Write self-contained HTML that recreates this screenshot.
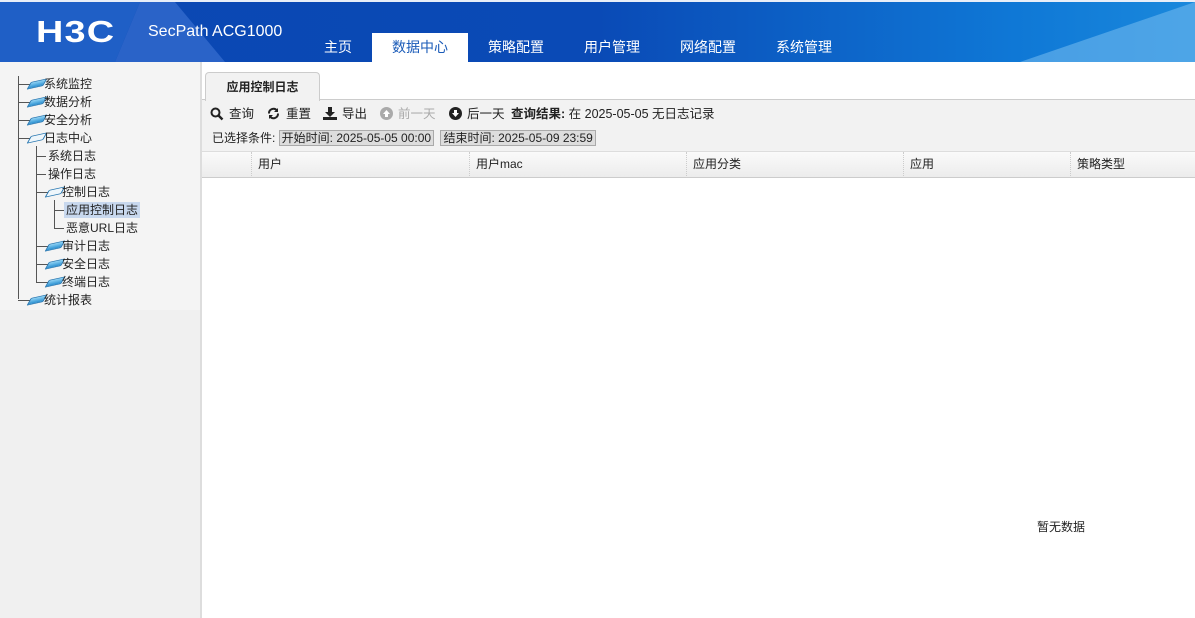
<!DOCTYPE html><html><head><meta charset="utf-8"><style>
body{margin:0;width:1195px;height:618px;overflow:hidden;font-family:"Liberation Sans","Noto Sans CJK SC",sans-serif;font-size:12px;color:#222;background:#fff;position:relative}
.hdr{position:absolute;left:0;top:0;width:1195px;height:62px;background:linear-gradient(90deg,#0b47b2 0%,#0a4ab6 50%,#0f78d6 85%,#1a88dc 100%);overflow:hidden;border-top:2px solid #e8eef8;box-sizing:border-box}
.a{position:absolute;white-space:nowrap}
.nav{position:absolute;top:33px;height:29px;line-height:29px;color:#fff;font-size:14px;text-align:center}
.side{position:absolute;left:0;top:62px;width:200px;height:556px;background:#f0f0f0;border-right:2px solid #ddd}
.t{position:absolute;font-size:12px;line-height:16px;color:#222;white-space:nowrap}
.ic{position:absolute;width:12px;height:6px;background:linear-gradient(#8fd3f5,#2a8fd0);border:1px solid #2475b0;transform:skewX(-40deg) rotate(-15deg);border-radius:1px}
.hl{position:absolute;height:1px;background:#555}
.vl{position:absolute;width:1px;background:#555}
.th{position:absolute;top:152px;height:24px;line-height:24px;border-left:1px dotted #ccc;padding-left:6px;box-sizing:border-box}
.tb{position:absolute;top:105px;line-height:18px;white-space:nowrap;font-size:12.5px}
</style></head><body>
<div class="hdr">
<div class="a" style="left:0;top:0;width:140px;height:62px;background:#1f5fc6;clip-path:polygon(0 0,140px 0,115px 60px,0 60px)"></div>
<div class="a" style="left:115px;top:0;width:110px;height:62px;background:#2a63c8;clip-path:polygon(25px 0,60px 0,110px 60px,0 60px)"></div>
<div class="a" style="left:1020px;top:0;width:175px;height:62px;background:rgba(120,190,240,.55);clip-path:polygon(0 60px,175px 0,175px 60px)"></div>
<div class="a" style="left:36px;top:12px;color:#fff;font-size:31px;font-weight:bold;letter-spacing:1px;line-height:36px;transform:scaleX(1.22);transform-origin:left">H3C</div>
<div class="a" style="left:148px;top:20px;color:#fff;font-size:16px;line-height:20px">SecPath ACG1000</div>
</div>
<div class="nav" style="left:312px;width:52px">主页</div>
<div class="nav" style="left:372px;width:96px;background:#fff;color:#1a5bb8">数据中心</div>
<div class="nav" style="left:476px;width:80px">策略配置</div>
<div class="nav" style="left:572px;width:80px">用户管理</div>
<div class="nav" style="left:668px;width:80px">网络配置</div>
<div class="nav" style="left:764px;width:80px">系统管理</div>
<div class="side">
<div class="a" style="left:0;top:0;width:200px;height:248px;background:#f4f4f4"></div>
</div>
<div class="vl" style="left:18px;top:76px;height:223px"></div>
<div class="hl" style="left:18px;top:84px;width:12px"></div><div class="ic" style="left:30px;top:80px"></div><div class="t" style="left:44px;top:76px">系统监控</div>
<div class="hl" style="left:18px;top:102px;width:12px"></div><div class="ic" style="left:30px;top:98px"></div><div class="t" style="left:44px;top:94px">数据分析</div>
<div class="hl" style="left:18px;top:120px;width:12px"></div><div class="ic" style="left:30px;top:116px"></div><div class="t" style="left:44px;top:112px">安全分析</div>
<div class="hl" style="left:18px;top:138px;width:12px"></div><div class="ic" style="left:30px;top:134px;background:#eef6fb"></div><div class="t" style="left:44px;top:130px">日志中心</div>
<div class="vl" style="left:36px;top:146px;height:136px"></div>
<div class="hl" style="left:36px;top:156px;width:10px"></div><div class="t" style="left:48px;top:148px">系统日志</div>
<div class="hl" style="left:36px;top:174px;width:10px"></div><div class="t" style="left:48px;top:166px">操作日志</div>
<div class="hl" style="left:36px;top:192px;width:12px"></div><div class="ic" style="left:48px;top:188px;background:#eef6fb"></div><div class="t" style="left:62px;top:184px">控制日志</div>
<div class="vl" style="left:54px;top:200px;height:28px"></div>
<div class="hl" style="left:54px;top:210px;width:10px"></div><div class="t" style="left:64px;top:202px;background:#c8d8ee;padding:0 2px">应用控制日志</div>
<div class="hl" style="left:54px;top:228px;width:10px"></div><div class="t" style="left:66px;top:220px">恶意URL日志</div>
<div class="hl" style="left:36px;top:246px;width:12px"></div><div class="ic" style="left:48px;top:242px"></div><div class="t" style="left:62px;top:238px">审计日志</div>
<div class="hl" style="left:36px;top:264px;width:12px"></div><div class="ic" style="left:48px;top:260px"></div><div class="t" style="left:62px;top:256px">安全日志</div>
<div class="hl" style="left:36px;top:282px;width:12px"></div><div class="ic" style="left:48px;top:278px"></div><div class="t" style="left:62px;top:274px">终端日志</div>
<div class="hl" style="left:18px;top:300px;width:12px"></div><div class="ic" style="left:30px;top:296px"></div><div class="t" style="left:44px;top:292px">统计报表</div>

<div class="a" style="left:202px;top:99px;width:993px;height:53px;background:#f2f2f2;border-top:1px solid #ccc"></div>
<div class="a" style="left:205px;top:72px;width:113px;height:28px;background:#f2f2f2;border:1px solid #ccc;border-bottom:none;border-radius:4px 4px 0 0;text-align:center;line-height:28px;font-weight:bold">应用控制日志</div>
<svg class="a" style="left:210px;top:107px" width="14" height="14" viewBox="0 0 14 14"><circle cx="5.5" cy="5.5" r="4" fill="none" stroke="#222" stroke-width="2"/><path d="M8.5 8.5L12.5 12.5" stroke="#222" stroke-width="2.4"/></svg>
<div class="tb" style="left:229px">查询</div>
<svg class="a" style="left:267px;top:107px" width="13" height="13" viewBox="0 0 13 13"><path d="M2 6.5A4.5 4.5 0 0 1 10 3.5M11 6.5A4.5 4.5 0 0 1 3 9.5" fill="none" stroke="#222" stroke-width="2"/><path d="M11 1v4H7zM2 12V8h4z" fill="#222"/></svg>
<div class="tb" style="left:286px">重置</div>
<svg class="a" style="left:323px;top:107px" width="14" height="13" viewBox="0 0 14 13"><path d="M5 0h4v5h3L7 10 2 5h3z" fill="#222"/><rect x="0" y="10" width="14" height="3" fill="#222"/></svg>
<div class="tb" style="left:342px">导出</div>
<svg class="a" style="left:380px;top:107px" width="13" height="13" viewBox="0 0 13 13"><circle cx="6.5" cy="6.5" r="6.5" fill="#aaa"/><path d="M6.5 3L10 7H8v3H5V7H3z" fill="#fff"/></svg>
<div class="tb" style="left:398px;color:#aaa">前一天</div>
<svg class="a" style="left:449px;top:107px" width="13" height="13" viewBox="0 0 13 13"><circle cx="6.5" cy="6.5" r="6.5" fill="#222"/><path d="M6.5 10L10 6H8V3H5v3H3z" fill="#fff"/></svg>
<div class="tb" style="left:467px">后一天</div>
<div class="tb" style="left:511px"><b>查询结果:</b> 在 2025-05-05 无日志记录</div>
<div class="a" style="left:212px;top:129px;line-height:18px;font-size:12px">已选择条件: <span style="background:#ddd;border:1px solid #aaa;padding:0 2px">开始时间: 2025-05-05 00:00</span> <span style="background:#ddd;border:1px solid #aaa;padding:0 2px;margin-left:3px">结束时间: 2025-05-09 23:59</span></div>
<div class="a" style="left:202px;top:151px;width:993px;height:25px;background:linear-gradient(#fafafa,#ececec);border-top:1px solid #ddd;border-bottom:1px solid #ccc"></div>
<div class="th" style="left:251px;width:218px">用户</div>
<div class="th" style="left:469px;width:217px">用户mac</div>
<div class="th" style="left:686px;width:217px">应用分类</div>
<div class="th" style="left:903px;width:167px">应用</div>
<div class="th" style="left:1070px;width:125px">策略类型</div>
<div class="a" style="left:1037px;top:518px">暂无数据</div>
</body></html>
